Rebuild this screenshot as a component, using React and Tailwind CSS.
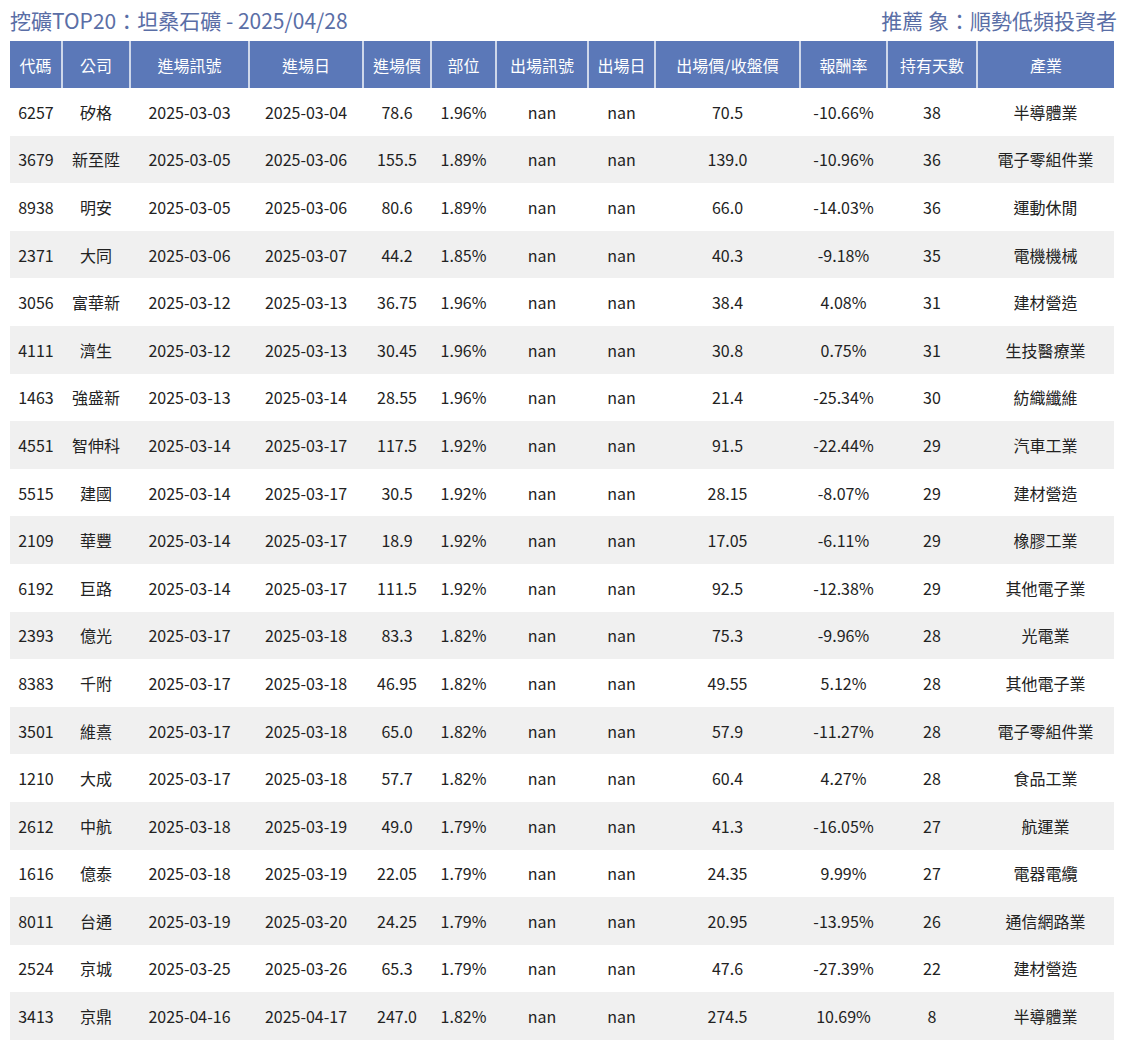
const rows = `6257 矽格 2025-03-03 2025-03-04 78.6 1.96% 70.5 -10.66% 38 半導體業
3679 新至陞 2025-03-05 2025-03-06 155.5 1.89% 139.0 -10.96% 36 電子零組件業
8938 明安 2025-03-05 2025-03-06 80.6 1.89% 66.0 -14.03% 36 運動休閒
2371 大同 2025-03-06 2025-03-07 44.2 1.85% 40.3 -9.18% 35 電機機械
3056 富華新 2025-03-12 2025-03-13 36.75 1.96% 38.4 4.08% 31 建材營造
4111 濟生 2025-03-12 2025-03-13 30.45 1.96% 30.8 0.75% 31 生技醫療業
1463 強盛新 2025-03-13 2025-03-14 28.55 1.96% 21.4 -25.34% 30 紡織纖維
4551 智伸科 2025-03-14 2025-03-17 117.5 1.92% 91.5 -22.44% 29 汽車工業
5515 建國 2025-03-14 2025-03-17 30.5 1.92% 28.15 -8.07% 29 建材營造
2109 華豐 2025-03-14 2025-03-17 18.9 1.92% 17.05 -6.11% 29 橡膠工業
6192 巨路 2025-03-14 2025-03-17 111.5 1.92% 92.5 -12.38% 29 其他電子業
2393 億光 2025-03-17 2025-03-18 83.3 1.82% 75.3 -9.96% 28 光電業
8383 千附 2025-03-17 2025-03-18 46.95 1.82% 49.55 5.12% 28 其他電子業
3501 維熹 2025-03-17 2025-03-18 65.0 1.82% 57.9 -11.27% 28 電子零組件業
1210 大成 2025-03-17 2025-03-18 57.7 1.82% 60.4 4.27% 28 食品工業
2612 中航 2025-03-18 2025-03-19 49.0 1.79% 41.3 -16.05% 27 航運業
1616 億泰 2025-03-18 2025-03-19 22.05 1.79% 24.35 9.99% 27 電器電纜
8011 台通 2025-03-19 2025-03-20 24.25 1.79% 20.95 -13.95% 26 通信網路業
2524 京城 2025-03-25 2025-03-26 65.3 1.79% 47.6 -27.39% 22 建材營造
3413 京鼎 2025-04-16 2025-04-17 247.0 1.82% 274.5 10.69% 8 半導體業`.split("\n").map(l => { const p = l.split(" "); return [p[0], p[1], p[2], p[3], p[4], p[5], "nan", "nan", p[6], p[7], p[8], p[9]]; });
const heads = ["代碼","公司","進場訊號","進場日","進場價","部位","出場訊號","出場日","出場價/收盤價","報酬率","持有天數","產業"];
const widths = [52,68,119,114,68,65,92,67,145,87,90,137];
export default function App() {
  return (
    <div className="bg-white w-[1125px] h-[1050px] px-[10px]" style={{fontFamily: '"Noto Sans CJK TC", "Noto Sans", sans-serif'}}>
      <div className="flex justify-between items-center h-[41px] text-[21px] text-[#5a6ea6]">
        <span>挖礦TOP20：坦桑石礦 - 2025/04/28</span>
        <span className="-mr-[2px]">推薦 象：順勢低頻投資者</span>
      </div>
      <table className="w-[1103px] border-collapse text-[16px] text-[#222] table-fixed">
        <colgroup>{widths.map((w,i)=><col key={i} style={{width:w}}/>)}</colgroup>
        <thead>
          <tr className="bg-[#5b78b8] text-white h-[47px]">
            {heads.map((h,i)=><th key={i} className="font-normal border-x-2 border-white/70 first:border-l-0 last:border-r-0 text-center">{h}</th>)}
          </tr>
        </thead>
        <tbody>
          {rows.map((r,i)=>(
            <tr key={i} className={`h-[47.6px] ${i%2 ? "bg-[#f0f0f0]" : "bg-white"}`}>
              {r.map((c,j)=><td key={j} className="text-center whitespace-nowrap">{c}</td>)}
            </tr>
          ))}
        </tbody>
      </table>
    </div>
  );
}
